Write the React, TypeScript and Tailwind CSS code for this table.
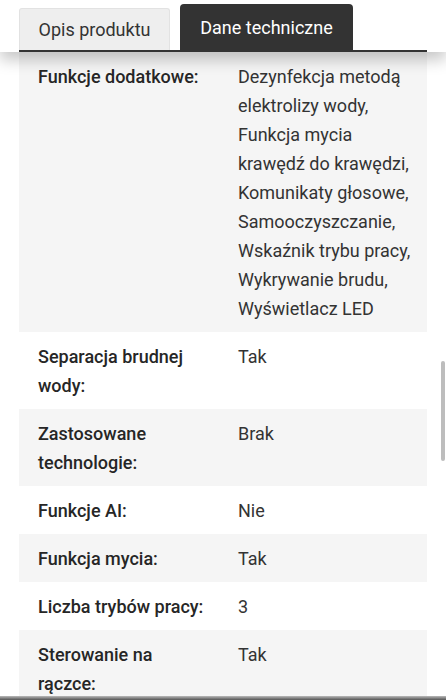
import React from 'react'

const ROWS: { label: string; value: string }[] = [
  {
    label: 'Funkcje dodatkowe:',
    value:
      'Dezynfekcja metodą elektrolizy wody, Funkcja mycia krawędź do krawędzi, Komunikaty głosowe, Samooczyszczanie, Wskaźnik trybu pracy, Wykrywanie brudu, Wyświetlacz LED',
  },
  { label: 'Separacja brudnej wody:', value: 'Tak' },
  { label: 'Zastosowane technologie:', value: 'Brak' },
  { label: 'Funkcje AI:', value: 'Nie' },
  { label: 'Funkcja mycia:', value: 'Tak' },
  { label: 'Liczba trybów pracy:', value: '3' },
  { label: 'Sterowanie na rączce:', value: 'Tak' },
]

export default function App() {
  return (
    <div
      className="relative h-[700px] w-[446px] overflow-hidden bg-white flex flex-col"
      style={{ fontFamily: 'Roboto, "Noto Sans", sans-serif' }}
    >
      {/* Tabs header */}
      <div className="relative z-10 bg-white px-[19px] pt-1 shadow-[0_8px_14px_rgba(0,0,0,0.22)]">
        <div className="flex items-end gap-[10px] border-b-2 border-[#333]">
          <button className="h-[42px] w-[151px] rounded-t-[3px] border border-b-0 border-[#e2e2e2] bg-[#eeeeee] text-[18px] text-[#333]">
            Opis produktu
          </button>
          <button className="h-[46px] w-[173px] rounded-t-[4px] bg-[#333333] text-[18px] text-white">
            Dane techniczne
          </button>
        </div>
      </div>

      {/* Spec table */}
      <div className="px-[19px]">
        {ROWS.map((r, i) => (
          <div
            key={r.label}
            className={`grid grid-cols-[200px_1fr] py-[9.5px] pl-[19px] pr-[10px] text-[18px] leading-[29px] ${
              i % 2 === 0 ? 'bg-[#f5f5f5]' : 'bg-white'
            }`}
          >
            <div className="pr-[28px] font-medium text-[#262626]">{r.label}</div>
            <div className="text-[#333]">{r.value}</div>
          </div>
        ))}
      </div>

      {/* Scrollbar thumb */}
      <div className="absolute right-[1px] top-[361px] h-[100px] w-[4px] rounded-sm bg-[#bdbdbd]" />

      {/* Bottom bar shadow */}
      <div className="absolute bottom-0 left-0 h-[4px] w-full bg-gradient-to-b from-[#bbb] to-[#555]" />
    </div>
  )
}
